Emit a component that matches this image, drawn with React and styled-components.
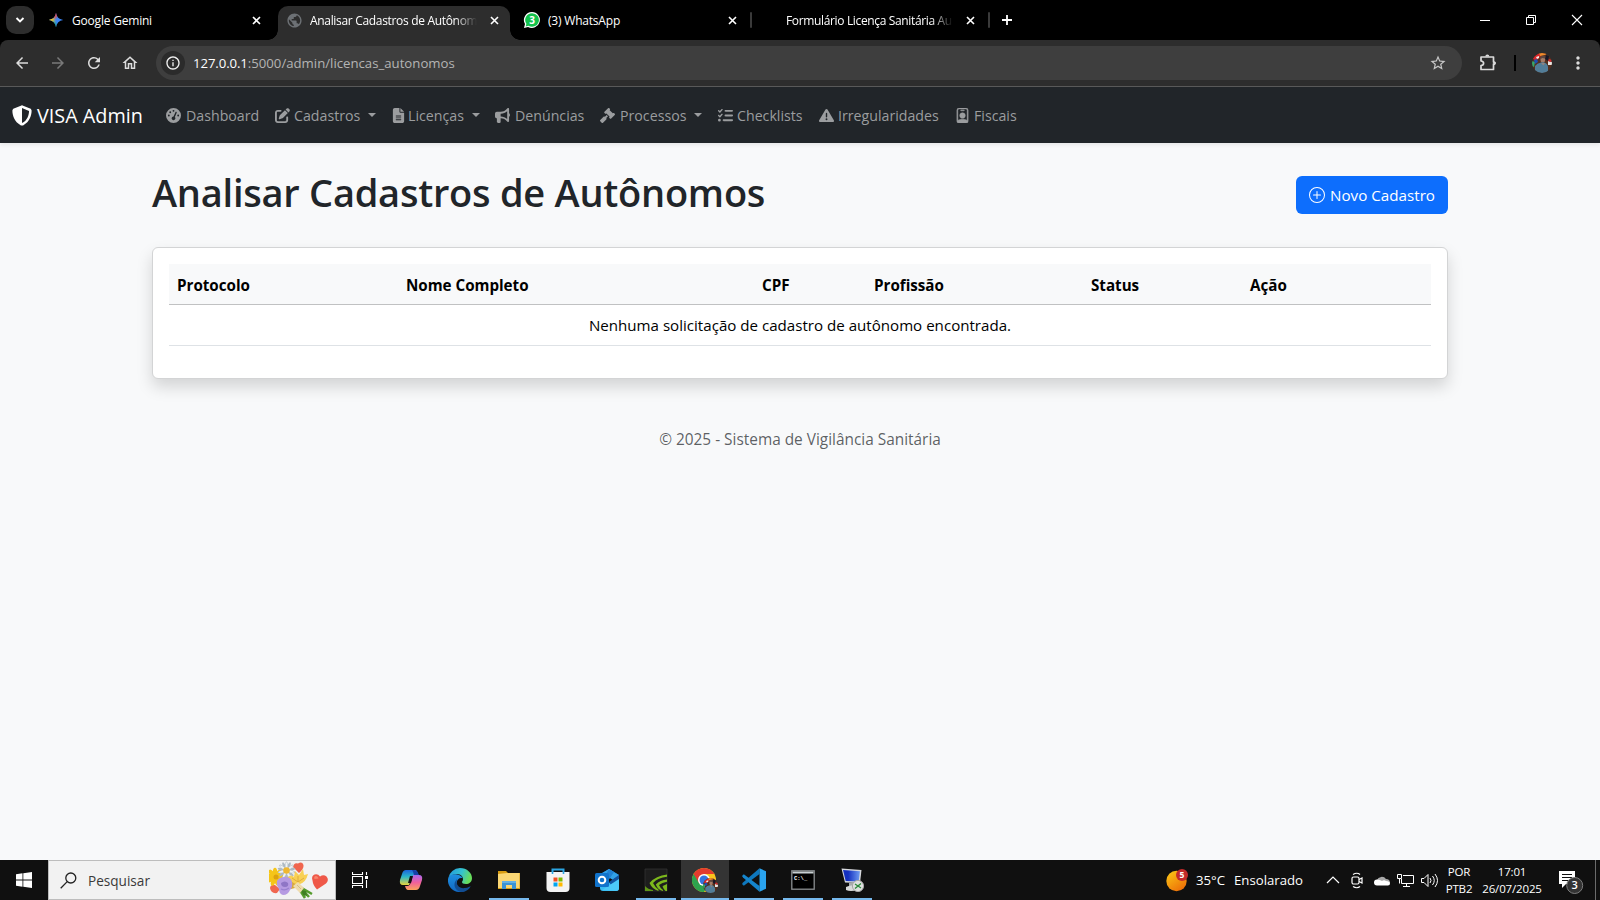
import React from 'react';
import styled, { createGlobalStyle } from 'styled-components';
import { FaGaugeHigh, FaPenToSquare, FaFileLines, FaBullhorn, FaGavel, FaListCheck, FaTriangleExclamation } from 'react-icons/fa6';
import { BsPersonBadge, BsPlusCircle } from 'react-icons/bs';
import { MdArrowBack, MdArrowForward, MdRefresh, MdOutlineHome, MdInfoOutline, MdStarBorder, MdMoreVert, MdPublic } from 'react-icons/md';

const Global = createGlobalStyle`
  * { box-sizing: border-box; }
  body { margin: 0; overflow: hidden; font-family: "Open Sans", "Noto Sans", sans-serif; }
  svg { display: block; flex: none; }
`;

const Screen = styled.div`
  width: 1600px;
  height: 900px;
  display: flex;
  flex-direction: column;
  background: #f8f9fa;
`;

/* ---------- browser chrome ---------- */
const TabStrip = styled.div`
  height: 40px;
  display: flex;
  align-items: center;
  background: #000;
  color: #fff;
  padding-left: 6px;
`;
const TabSearch = styled.div`
  width: 28px;
  height: 28px;
  border-radius: 10px;
  background: #2d2d2d;
  display: grid;
  place-items: center;
`;
const Tab = styled.div`
  position: relative;
  width: ${p => p.$width}px;
  height: 34px;
  align-self: flex-end;
  display: flex;
  align-items: center;
  padding: 0 ${p => p.$right || 10}px 6px ${p => p.$left}px;
  border-radius: 10px 10px 0 0;
  background: ${p => (p.$active ? '#2d2d2d' : 'transparent')};
  ${p => p.$active && `
    &::before, &::after {
      content: '';
      position: absolute;
      bottom: 0;
      width: 10px;
      height: 10px;
    }
    &::before { left: -10px; background: radial-gradient(circle at 0 0, transparent 9.5px, #2d2d2d 10px); }
    &::after { right: -10px; background: radial-gradient(circle at 100% 0, transparent 9.5px, #2d2d2d 10px); }
  `}
`;
const Favicon = styled.span`
  width: ${p => p.$width || 16}px;
  margin-right: ${p => p.$gap || 8}px;
  display: flex;
  justify-content: center;
`;
const TabTitle = styled.span`
  flex: 1;
  min-width: 0;
  padding-top: 2px;
  overflow: hidden;
  white-space: nowrap;
  font-size: 12px;
  line-height: 18px;
  letter-spacing: ${p => p.$track || -0.2}px;
  ${p => p.$fade && 'mask-image: linear-gradient(to right, #000 calc(100% - 22px), transparent);'}
`;
const TabClose = styled.span`
  width: 12px;
  margin-left: 11px;
  display: flex;
  justify-content: center;
`;
const TabDivider = styled.span`
  width: 2px;
  height: 16px;
  background: #3a3a3a;
  border-radius: 1px;
`;
const NewTab = styled.span`
  margin-left: 11px;
`;
const WindowButtons = styled.div`
  margin-left: auto;
  display: flex;
`;
const WindowButton = styled.span`
  width: 46px;
  height: 40px;
  display: grid;
  place-items: center;
`;
const ToolbarBack = styled.div`
  background: #000;
`;
const Toolbar = styled.div`
  height: 47px;
  display: flex;
  align-items: center;
  background: #2d2d2d;
  border-bottom: 1px solid #5a5a5a;
  border-radius: 8px 8px 0 0;
  padding-left: 4px;
  color: #dcdcdc;
`;
const ToolButton = styled.span`
  width: 36px;
  display: grid;
  place-items: center;
  color: ${p => (p.$dim ? '#797979' : '#dcdcdc')};
`;
const AddressBar = styled.div`
  width: 1306px;
  height: 34px;
  flex: none;
  margin-left: 8px;
  padding: 0 15px 0 5px;
  border-radius: 17px;
  background: #3e3e3e;
  display: flex;
  align-items: center;
`;
const SiteInfo = styled.span`
  width: 24px;
  height: 24px;
  border-radius: 50%;
  background: #2b2b2b;
  display: grid;
  place-items: center;
  color: #f1f1f1;
`;
const Url = styled.span`
  flex: 1;
  margin-left: 8px;
  font-size: 13.2px;
  color: #b4b4b4;
  b { font-weight: 400; color: #fff; letter-spacing: -0.1px; }
`;
const ToolDivider = styled.span`
  width: 2px;
  height: 16px;
  margin: 0 16px 0 8px;
  background: #000;
`;
const Tools = styled.div`
  display: flex;
  align-items: center;
  gap: 0;
  margin-left: 8px;
`;
const MenuButton = styled.span`
  margin-left: 16px;
`;

/* ---------- page ---------- */
const Navbar = styled.nav`
  height: 56px;
  display: flex;
  align-items: center;
  padding-left: 12px;
  background: #212529;
  box-shadow: 0 2px 4px rgba(0, 0, 0, 0.075);
`;
const Brand = styled.span`
  width: 146px;
  display: flex;
  align-items: center;
  gap: 5px;
  color: #fff;
  font-size: 19.8px;
  white-space: nowrap;
`;
const NavLink = styled.span`
  width: ${p => p.$width}px;
  padding-left: 8px;
  display: flex;
  align-items: center;
  color: #9b9d9f;
  font-size: 14.2px;
  white-space: nowrap;
`;
const NavIcon = styled.span`
  width: ${p => p.$width}px;
  margin-right: 4px;
  display: flex;
  justify-content: ${p => p.$align || 'flex-start'};
`;
const Caret = styled.span`
  margin-left: 8px;
  border-top: 4px solid currentColor;
  border-left: 4px solid transparent;
  border-right: 4px solid transparent;
`;
const Page = styled.main`
  flex: 1;
  width: 1296px;
  margin: 0 auto;
  padding-top: 24px;
`;
const Heading = styled.div`
  height: 56px;
  display: flex;
  justify-content: space-between;
  margin-bottom: 24px;
`;
const Title = styled.h1`
  margin: 0;
  font-size: 38px;
  line-height: 50px;
  font-weight: 600;
  letter-spacing: -0.25px;
  color: #212529;
  white-space: nowrap;
`;
const NewButton = styled.button`
  width: 152px;
  height: 38px;
  margin-top: 9px;
  padding: 0 0 0 13px;
  border: 0;
  border-radius: 6px;
  background: #0d6efd;
  color: #fff;
  font: 15.2px "Open Sans", sans-serif;
  display: flex;
  align-items: center;
  gap: 5px;
  white-space: nowrap;
`;
const Card = styled.section`
  height: 132px;
  padding: 16px;
  background: #fff;
  border: 1px solid #d3d4d5;
  border-radius: 6px;
  box-shadow: 0 8px 16px rgba(0, 0, 0, 0.15);
`;
const Table = styled.table`
  width: 1262px;
  table-layout: fixed;
  border-collapse: separate;
  border-spacing: 0;
  color: #000;
`;
const HeadCell = styled.th`
  width: ${p => p.$width}px;
  height: 41px;
  padding: 1px 8px 0;
  text-align: left;
  font-weight: 700;
  font-size: 15.2px;
  letter-spacing: -0.02px;
  background: #f8f9fa;
  border-bottom: 1px solid #c0c1c2;
`;
const EmptyCell = styled.td`
  height: 41px;
  padding: 0;
  text-align: center;
  font-size: 15.12px;
  border-bottom: 1px solid #dee2e6;
`;
const Footer = styled.footer`
  margin-top: 49px;
  line-height: 24px;
  text-align: center;
  font-size: 15.4px;
  color: rgba(33, 37, 41, 0.73);
`;

/* ---------- taskbar ---------- */
const Taskbar = styled.div`
  height: 40px;
  display: flex;
  background: #101010;
  color: #fff;
`;
const StartButton = styled.span`
  width: 48px;
  display: grid;
  place-items: center;
`;
const SearchBox = styled.div`
  width: 288px;
  height: 40px;
  padding-left: 11px;
  display: flex;
  align-items: center;
  background: #f2f2f2;
  border: 1px solid #bdbdbd;
  color: #3a3a3a;
  font-size: 13.6px;
`;
const SearchLabel = styled.span`
  width: 181px;
  margin-left: 11px;
`;
const TaskView = styled.span`
  width: 50px;
  display: grid;
  place-items: center;
  padding-right: 2px;
`;
const Apps = styled.div`
  display: flex;
  margin-left: 1px;
`;
const AppButton = styled.span`
  width: 49px;
  display: grid;
  place-items: center;
  background-color: ${p => (p.$active ? '#343434' : 'transparent')};
  background-clip: padding-box;
  border-right: 1px solid transparent;
`;
const RunningApp = styled(AppButton)`
  background-image: linear-gradient(#76b9ed, #76b9ed);
  background-size: ${p => (p.$active ? 48 : 40)}px 2px;
  background-position: 50% 100%;
  background-repeat: no-repeat;
`;
const Tray = styled.div`
  margin-left: auto;
  display: flex;
  align-items: center;
`;
const Weather = styled.span`
  width: 155px;
  display: flex;
  align-items: center;
  font-size: 13.2px;
  white-space: nowrap;
`;
const Degrees = styled.span`
  width: 38px;
  margin-left: 7px;
`;
const TrayIcon = styled.span`
  width: 24px;
  display: grid;
  place-items: center;
`;
const Stacked = styled.span`
  width: ${p => p.$width}px;
  text-align: center;
  font-size: 11.5px;
  line-height: 17.5px;
  letter-spacing: -0.15px;
  white-space: nowrap;
`;
const Notifications = styled.span`
  width: 48px;
  display: flex;
  justify-content: center;
`;
const ShowDesktop = styled.span`
  width: 5px;
  height: 40px;
  border-left: 1px solid #6b6b6b;
`;

const Cross = () => (
  <svg width="9" height="9" viewBox="0 0 9 9" stroke="#fff" strokeWidth="1.600"><path d="M1 1l7 7M8 1l-7 7" /></svg>
);

const ShieldIcon = () => (
  <svg width="20" height="21" viewBox="6 0 500 512" fill="#fff">
    <path fillRule="evenodd" d="M256 0c5 0 9 1 13 3l189 80c22 9 38 31 38 57-.5 99-41 281-213 363-17 8-37 8-53 0C57 421 16.500 239 16 140c0-26 16-48 38-57L243 3c4-2 8-3 13-3zM256 67v378c138-67 175-215 176-304z" />
  </svg>
);

const PuzzleIcon = () => (
  <svg width="18" height="18" viewBox="0 0 18 18">
    <path d="M2 3h12.500v5l1.500 1-1.500 1v5.500H2v-4q2.600-.3 2.600-2.300T2 7z" fill="none" stroke="#dcdcdc" strokeWidth="1.700" strokeLinejoin="round" />
    <path d="M6.300 2.600a2 2 0 0 1 4 0zM14.800 7.200a2 2 0 0 1 0 4z" fill="#dcdcdc" />
  </svg>
);

const GeminiIcon = () => (
  <svg width="16" height="16" viewBox="0 0 16 16">
    <defs>
      <clipPath id="spark"><path d="M8 .8C8.700 5 11 7.300 15.200 8 11 8.700 8.700 11 8 15.200 7.300 11 5 8.700.8 8 5 7.300 7.300 5 8 .8z" /></clipPath>
      <filter id="soft"><feGaussianBlur stdDeviation="1" /></filter>
    </defs>
    <g clipPath="url(#spark)">
      <rect width="16" height="16" fill="#3b86f7" />
      <g filter="url(#soft)">
        <path d="M4-1h8L8 6 6 7z" fill="#f0453a" />
        <path d="M-1 4l7 2v4l-7 2z" fill="#f9c613" />
        <path d="M3 9l4 1 2 7H4z" fill="#19ac58" />
      </g>
    </g>
  </svg>
);

const WhatsAppIcon = () => (
  <svg width="18" height="18" viewBox="0 0 18 18">
    <path d="M9 1a8 8 0 1 1-4 15L1 17l1-4A8 8 0 0 1 9 1z" fill="#fff" />
    <path d="M9 2.200a6.800 6.800 0 1 1-3.600 12.500l-2.700.7.700-2.600A6.800 6.800 0 0 1 9 2.200z" fill="#12c14c" />
    <text x="9.100" y="12.700" textAnchor="middle" fontSize="10" fontWeight="700" fontFamily="Open Sans" fill="#fff">3</text>
  </svg>
);

const Avatar = ({ size = 20, ...rest }) => (
  <svg width={size} height={size} viewBox="0 0 20 20" {...rest}>
    <clipPath id="face"><circle cx="10" cy="10" r="10" /></clipPath>
    <g clipPath="url(#face)">
      <rect width="20" height="20" fill="#54301f" />
      <path d="M0 5l7-5 2 3-5 5z" fill="#d8262b" />
      <path d="M7 0h9l-3 2-5 1z" fill="#ef8a2c" />
      <path d="M0 8l3 1-1 5-2-1z" fill="#36a86a" />
      <path d="M2 7l3-1 1 3-3 2z" fill="#1f4fb4" />
      <path d="M4 4l3-1v2l-2 1z" fill="#f1ece8" />
      <path d="M14 2l3 1-1 5-3-2z" fill="#16182b" />
      <path d="M16 8l4 1v3l-4 0z" fill="#e9e4e0" />
      <path d="M17 6l3 1-1 2-3-1z" fill="#d2292f" />
      <ellipse cx="10.800" cy="6.500" rx="2.300" ry="3.200" fill="#a57d69" />
      <path d="M8 5q2-3.500 5.500-1.500l-.5 2-3-.5-1 1z" fill="#5e4740" />
      <path d="M3 20V13q2-3 6-3.500 5-1 7 4V20z" fill="#527d98" />
      <path d="M9 10l2.300 2.500L13 10z" fill="#8f8580" />
    </g>
  </svg>
);

const petals = (cx, cy, count, rx, ry, fill) => Array.from({ length: count }, (_, i) => (
  <ellipse key={`${cx}-${i}`} cx={cx} cy={cy - ry} rx={rx} ry={ry} fill={fill} transform={`rotate(${(360 / count) * i} ${cx} ${cy})`} />
));

const Flowers = () => (
  <svg width="62" height="38" viewBox="0 0 62 38">
    <path d="M29 26l7 11M31 26l12 7M30 25l10 11" stroke="#559c2d" strokeWidth="2.600" />
    <path d="M32 29l5 1 1 5-4-1z" fill="#3f7f22" />
    <path d="M24 6q1-5 5-3.500Q33 0 34.500 4q.5 4-4.500 8z" fill="#f0664f" />
    <path d="M1 27q1-4 5-3l5 4-3 4q-6 1-7-5z" fill="#f0664f" />
    {petals(6, 16, 9, 2.2, 4.6, '#f5c518')}
    <circle cx="7" cy="16" r="2.500" fill="#dca20f" />
    <path d="M15 15l12 2 3 9-8 2-9-9z" fill="#d9a93c" />
    {petals(17.500, 9.500, 14, 1.300, 4.500, '#aebac2')}
    {petals(17.500, 9.500, 7, 1, 4.100, '#eef2f4')}
    <circle cx="17.500" cy="9.500" r="3.300" fill="#efb72f" />
    <path d="M19 16q3-3 6 0l1-6 4 4 4-6 1 6 4-1q-2 8-8 10-8 1-12-7z" fill="#f8d055" />
    <path d="M23 17l6 4 6-4M29 15v6" stroke="#dda83a" strokeWidth=".9" fill="none" />
    <path d="M24 25l5-4 6 6-4 5z" fill="#efdcae" />
    <path d="M28 24l4 4" stroke="#cdb57b" strokeWidth=".8" />
    <path d="M8 20q2-4 8-4 6 0 7 5 1 5-2 8-2 5-7 5-4-1-4-6-3-4-2-8z" fill="#b69be2" />
    <path d="M12 22q4-3 7 0 1 4-3 4t-4-4z" fill="#8f76c6" />
    <path d="M12 28q4 2 8-1" stroke="#9a81d0" strokeWidth="1.200" fill="none" />
    <path d="M43.500 19.500q-1.500-4.500 2-6 3.500-1 5.500 2 3.500-2.500 6.500 0 3 3.500-.5 7l-9 6q-4-4-4.500-9z" fill="#ef5848" />
    <path d="M45.500 18q-1-3 1.500-3 2 0 2.500 2.500z" fill="#f8856d" />
  </svg>
);

const CopilotIcon = () => (
  <svg width="24" height="24" viewBox="0 0 24 24">
    <defs>
      <linearGradient id="cpA" x1="0" y1="0" x2="0" y2="1"><stop offset="0" stopColor="#1b63dc" /><stop offset=".45" stopColor="#2bb5c9" /><stop offset="1" stopColor="#e8d43c" /></linearGradient>
      <linearGradient id="cpB" x1="0" y1="0" x2="0" y2="1"><stop offset="0" stopColor="#a968ee" /><stop offset=".5" stopColor="#f0609c" /><stop offset="1" stopColor="#fba35b" /></linearGradient>
    </defs>
    <path d="M7 2h9q2 0 3 4l1 2h-4q-3 0-4 4l-2 5H4q-4 0-3-5l2-6q1-4 4-4z" fill="url(#cpA)" />
    <path d="M17 22H9q-2 0-3-4h2q3 0 4-4l2-7h6q4 0 3 5l-2 6q-1 4-4 4z" fill="url(#cpB)" />
    <path d="M13 2h2q3 0 4 3l1 2h-5q-1-4-2-5z" fill="#1641a8" />
    <path d="M11 8h3l-2 7H9z" fill="#101010" />
  </svg>
);

const EdgeIcon = () => (
  <svg width="24" height="24" viewBox="0 0 24 24">
    <defs>
      <linearGradient id="edA" x1="0" y1="0" x2="1" y2=".3"><stop offset="0" stopColor="#2195dd" /><stop offset=".6" stopColor="#35c3cf" /><stop offset="1" stopColor="#67dd5c" /></linearGradient>
      <linearGradient id="edB" x1="0" y1="0" x2="0" y2="1"><stop offset="0" stopColor="#1f8fdf" /><stop offset="1" stopColor="#1168c3" /></linearGradient>
    </defs>
    <path d="M.3 10A12 12 0 0 1 12 0c7 0 12 5 12 10 0 4-3 6-6 6-3 0-4-1-4-2 0-.8 1-1 1-3 0-2-2-5-6-5-5 0-8 3-8.700 4z" fill="url(#edA)" />
    <path d="M0 11C1 7 5 6 8 6.300c3 .2 6 2 6.700 4-3-1-6 1-6 5 0 5 5 7.500 9 7.500C8 27-1 20 0 11z" fill="url(#edB)" />
    <path d="M9 11c-2 6 3 10 8 9 3-.4 5-1.600 5.700-1.800C21 22 17 24 13 24c-6-1-9-8-4-13z" fill="#124d92" />
  </svg>
);

const ExplorerIcon = () => (
  <svg width="24" height="24" viewBox="0 0 24 24">
    <path d="M1 3h8l2 2h12v16H1z" fill="#d99d12" /><path d="M1 6l9-1h12.500v15H1z" fill="#fbd774" />
    <path d="M5 21v-8h14v8h-4v-4H9v4z" fill="#3b93d6" /><path d="M5 13h14v2H5z" fill="#62b0e6" />
  </svg>
);

const StoreIcon = () => (
  <svg width="24" height="24" viewBox="0 0 24 24">
    <path d="M6.500 5V1.500h11V5" fill="none" stroke="#2ba5e2" strokeWidth="2" />
    <path d="M.5 4h23v16q0 4-4 4h-15q-4 0-4-4z" fill="#f3f3f3" />
    <path d="M6.500 4v2M17.500 4v2" stroke="#2ba5e2" strokeWidth="1.600" />
    <path d="M7.500 9.500h4v4h-4z" fill="#f25022" /><path d="M12.500 9.500h4v4h-4z" fill="#7fba00" />
    <path d="M7.500 14.500h4v4h-4z" fill="#00a4ef" /><path d="M12.500 14.500h4v4h-4z" fill="#ffb900" />
  </svg>
);

const OutlookIcon = () => (
  <svg width="26" height="24" viewBox="0 0 26 24">
    <path d="M5 7l10-6 10 6v3H5z" fill="#1561b4" /><path d="M8 5l7-4 10 6-6 5z" fill="#31a1e8" />
    <path d="M15 1l5 3-6 9-4-3z" fill="#2181d4" /><path d="M6 9l9 6 10-7v12q0 3-3 3H9q-3 0-3-3z" fill="#36bdf2" />
    <path d="M15 14l10-7v5l-8 5z" fill="#1253a0" /><path d="M8 22l17-11v9q0 3-3 3z" fill="#4cc9f8" />
    <rect x="1" y="5" width="14" height="14" rx="1.500" fill="#1173cb" />
    <circle cx="8" cy="12" r="3.300" fill="none" stroke="#fff" strokeWidth="2" />
  </svg>
);

const NvidiaIcon = () => (
  <svg width="24" height="24" viewBox="0 0 24 24">
    <path d="M1 1h22v22H1z" fill="#1d1d1d" stroke="#333" strokeWidth=".8" />
    <path d="M23 6.500v2.300Q14 9.500 9 15q2 4 5.500 6.500V23Q8 21 5.500 15 12 7.500 23 6.500z" fill="#7cb81c" />
    <path d="M23 11.500v2.300q-5 .7-8 3.200 1.500 3.500 4 5v1q-5-1-7.200-6.500Q16 12 23 11.500z" fill="#7cb81c" />
    <path d="M23 16v7h-1.500q-2-2-3-4.500Q20 17 23 16z" fill="#7cb81c" />
    <path d="M1 18q3 3.500 8 4v1H1z" fill="#5f9617" />
  </svg>
);

const ChromeIcon = () => (
  <svg width="26" height="26" viewBox="0 0 26 26">
    <circle cx="12" cy="13" r="12" fill="#fbc31c" />
    <path d="M12 13L1.600 7A12 12 0 0 0 12 25l5-9z" fill="#2da44e" />
    <path d="M12 7h10.400A12 12 0 0 0 1.600 7L7 16z" fill="#e33b2e" />
    <circle cx="12" cy="13" r="6" fill="#fff" /><circle cx="12" cy="13" r="4.500" fill="#3474e0" />
    <Avatar size={15} x="11" y="11" />
  </svg>
);

const CodeIcon = () => (
  <svg width="24" height="24" viewBox="0 0 24 24">
    <path d="M0 16l1.800 1.700L17.500 6V.3L1 14.500z" fill="#0e77bd" />
    <path d="M0 8l1.800-1.700L17.500 18v5.700L1 9.500z" fill="#1585cc" />
    <path d="M17.500.3L24 3.200v17.600l-6.500 2.900z" fill="#2aa3ee" />
  </svg>
);

const TerminalIcon = () => (
  <svg width="24" height="20" viewBox="0 0 24 20">
    <rect x=".8" y=".8" width="22.400" height="18.400" fill="#000" stroke="#8b8f91" strokeWidth="1.300" />
    <path d="M1.500 1.500h21v2h-21z" fill="#c9d0d3" />
    <text x="3" y="9.500" fontSize="5.500" fontFamily="Liberation Mono" fontWeight="700" fill="#fff">C:\_</text>
  </svg>
);

const RemoteIcon = () => (
  <svg width="24" height="26" viewBox="0 0 24 26">
    <defs><linearGradient id="scr" x1="0" y1="0" x2="1" y2="0"><stop offset=".3" stopColor="#1531c0" /><stop offset="1" stopColor="#6f9df2" /></linearGradient></defs>
    <path d="M9 16h7l1 5H9z" fill="#a6abad" /><path d="M6 20q6-3 11-1l1 4q-8 2-12 0z" fill="#d9dada" />
    <path d="M1.500 1.500l20 1.500-1.500 13-15-.5z" fill="#d6d8dd" /><path d="M3 3l17 1.200-1.300 10.300-13-.5z" fill="url(#scr)" />
    <circle cx="18" cy="19" r="5.600" fill="#dfe0df" stroke="#a6a6a6" /><path d="M15 17l3 2-3 2.500M21 16.500l-3 2.500 3 2" stroke="#2c8a3b" strokeWidth="1.300" fill="none" />
  </svg>
);

const WeatherIcon = () => (
  <svg width="23" height="24" viewBox="0 0 23 24">
    <defs><linearGradient id="sun" x1="0" y1="0" x2=".7" y2="1"><stop offset="0" stopColor="#fccb16" /><stop offset="1" stopColor="#ec6f08" /></linearGradient></defs>
    <circle cx="10.500" cy="13" r="10.200" fill="url(#sun)" /><circle cx="16" cy="7" r="6" fill="#c42b2b" />
    <text x="16" y="10" fontSize="8.500" fontWeight="700" fontFamily="Open Sans" textAnchor="middle" fill="#fff">5</text>
  </svg>
);

const NotificationIcon = () => (
  <svg width="26" height="28" viewBox="0 0 26 28">
    <path d="M1 5h16v13H8l-4 4v-4H1z" fill="#fff" />
    <path d="M4 8.500h10M4 11.500h10M4 14.500h7" stroke="#101010" strokeWidth="1.200" />
    <circle cx="16.700" cy="19.500" r="8" fill="#333" stroke="#7d7d7d" />
    <text x="16.700" y="23.300" fontSize="11" fontWeight="600" fontFamily="Open Sans" textAnchor="middle" fill="#fff">3</text>
  </svg>
);

const navItems = [
  { label: 'Dashboard', icon: FaGaugeHigh, slot: 16, width: 108 },
  { label: 'Cadastros', icon: FaPenToSquare, slot: 16, width: 118, menu: true, align: 'flex-end' },
  { label: 'Licenças', icon: FaFileLines, slot: 12, width: 103, menu: true, align: 'center' },
  { label: 'Denúncias', icon: FaBullhorn, slot: 16, width: 105 },
  { label: 'Processos', icon: FaGavel, slot: 16, width: 117, menu: true },
  { label: 'Checklists', icon: FaListCheck, slot: 16, width: 102, align: 'flex-end' },
  { label: 'Irregularidades', icon: FaTriangleExclamation, slot: 15, width: 135 },
  { label: 'Fiscais', icon: BsPersonBadge, slot: 16, width: 80, align: 'flex-end', bold: true },
];

const columns = [
  ['Protocolo', 229], ['Nome Completo', 356], ['CPF', 112], ['Profissão', 217], ['Status', 159], ['Ação', 189],
];

const apps = [
  { icon: CopilotIcon }, { icon: EdgeIcon }, { icon: ExplorerIcon, running: true }, { icon: StoreIcon },
  { icon: OutlookIcon }, { icon: NvidiaIcon, running: true }, { icon: ChromeIcon, running: true, active: true },
  { icon: CodeIcon, running: true }, { icon: TerminalIcon, running: true }, { icon: RemoteIcon, running: true },
];

function Browser() {
  return (
    <>
      <TabStrip>
        <TabSearch><svg width="10" height="8" viewBox="0 0 10 8"><path d="M1.500 2L5 5.500 8.500 2" fill="none" stroke="#fff" strokeWidth="1.900" /></svg></TabSearch>
        <Tab $width={244} $left={14} $right={16}>
          <Favicon><GeminiIcon /></Favicon><TabTitle>Google Gemini</TabTitle><TabClose><Cross /></TabClose>
        </Tab>
        <Tab $width={232} $left={8} $active>
          <Favicon><MdPublic size={17} color="#6d7175" /></Favicon><TabTitle $fade $track={-0.32}>Analisar Cadastros de Autônom</TabTitle><TabClose><Cross /></TabClose>
        </Tab>
        <Tab $width={240} $left={13} $right={12}>
          <Favicon $width={18} $gap={7}><WhatsAppIcon /></Favicon><TabTitle>(3) WhatsApp</TabTitle><TabClose><Cross /></TabClose>
        </Tab>
        <TabDivider />
        <Tab $width={236} $left={34} $right={12}>
          <TabTitle $fade $track={-0.35}>Formulário Licença Sanitária Au</TabTitle><TabClose><Cross /></TabClose>
        </Tab>
        <TabDivider />
        <NewTab><svg width="12" height="12" viewBox="0 0 12 12" stroke="#fff" strokeWidth="1.800"><path d="M6 1v10M1 6h10" /></svg></NewTab>
        <WindowButtons>
          <WindowButton><svg width="10" height="10" stroke="#fff"><path d="M0 5.500h10" /></svg></WindowButton>
          <WindowButton><svg width="11" height="11" fill="none" stroke="#fff"><path d="M.5 2.500h7v7h-7zM2.500 2.500v-2h7v7h-2" /></svg></WindowButton>
          <WindowButton><svg width="12" height="12" stroke="#fff" strokeWidth="1.100"><path d="M1 1l10 10M11 1L1 11" /></svg></WindowButton>
        </WindowButtons>
      </TabStrip>
      <ToolbarBack>
        <Toolbar>
          <ToolButton><MdArrowBack size={18} /></ToolButton>
          <ToolButton $dim><MdArrowForward size={18} /></ToolButton>
          <ToolButton><MdRefresh size={18} /></ToolButton>
          <ToolButton><MdOutlineHome size={18} /></ToolButton>
          <AddressBar>
            <SiteInfo><MdInfoOutline size={16} /></SiteInfo>
            <Url><b>127.0.0.1</b>:5000/admin/licencas_autonomos</Url>
            <MdStarBorder size={18} color="#c7c7c7" />
          </AddressBar>
          <Tools>
            <ToolButton><PuzzleIcon /></ToolButton>
            <ToolDivider />
            <Avatar />
            <MenuButton><MdMoreVert size={20} /></MenuButton>
          </Tools>
        </Toolbar>
      </ToolbarBack>
    </>
  );
}

function SystemBar() {
  return (
    <Taskbar>
      <StartButton><svg width="16" height="16" viewBox="0 0 16 16" fill="#fff"><path d="M0 2.200L6.500 1.300v6.200H0zM7.300 1.200L16 0v7.500H7.300zM0 8.500h6.500v6.200L0 13.800zM7.300 8.500H16V16l-8.700-1.200z" /></svg></StartButton>
      <SearchBox>
        <svg width="17" height="17" viewBox="0 0 17 17" fill="none" stroke="#222" strokeWidth="1.300"><circle cx="10.800" cy="6" r="5" /><path d="M7.200 9.600L.7 16.200" /></svg>
        <SearchLabel>Pesquisar</SearchLabel>
        <Flowers />
      </SearchBox>
      <TaskView><svg width="17" height="16" viewBox="0 0 17 16" fill="none" stroke="#fff" strokeWidth="1.100"><path d="M.5 4.500h10v7H.5zM.5 0v2.500h10V0M.5 16v-2.500h10V16M14.500 0v3M14.500 8v8" /><path d="M13 4h3v3h-3z" fill="#fff" stroke="none" /></svg></TaskView>
      <Apps>
        {apps.map(({ icon: Icon, running, active }, i) => {
          const Button = running ? RunningApp : AppButton;
          return <Button key={i} $active={active}><Icon /></Button>;
        })}
      </Apps>
      <Tray>
        <Weather><WeatherIcon /><Degrees>35°C</Degrees>Ensolarado</Weather>
        <TrayIcon><svg width="14" height="8" fill="none" stroke="#fff" strokeWidth="1.200"><path d="M1 7l6-6 6 6" /></svg></TrayIcon>
        <TrayIcon><svg width="14" height="17" viewBox="0 0 14 17" fill="none" stroke="#fff" strokeWidth="1.200"><rect x="2" y="5" width="7" height="7" rx="1.500" /><path d="M9 7.500l3-1.500v5L9 9.500M3 2.500q4-2.500 7 0M3 14.500q4 2.500 7 0" /></svg></TrayIcon>
        <TrayIcon><svg width="17" height="12" viewBox="0 0 17 12"><path d="M4 6a5 4.500 0 0 1 9-1q4 0 4 4H2z" fill="#a9a9a9" /><path d="M4 11.500a3 3 0 0 1 0-6q3 0 5 1.500 2-1.500 4 0 4 0 4 2.500 0 2-2 2z" fill="#fff" /></svg></TrayIcon>
        <TrayIcon><svg width="17" height="15" viewBox="0 0 17 15" fill="none" stroke="#fff"><path d="M6 2.500h10.500v8H4.500V6M9.500 10.500v3M6 13.500h7M.5 1.500h4v4h-4zM2.500 5.500v5" /></svg></TrayIcon>
        <TrayIcon><svg width="17" height="15" viewBox="0 0 17 15" fill="none" stroke="#fff"><path d="M.5 5.500H3l4-4v12l-4-4H.5zM9 5q2 2.500 0 5M11.500 3q3.500 4.500 0 9M14 1q5 6.500 0 13" /></svg></TrayIcon>
        <Stacked $width={36}>POR<br />PTB2</Stacked>
        <Stacked $width={70}>17:01<br />26/07/2025</Stacked>
        <Notifications><NotificationIcon /></Notifications>
        <ShowDesktop />
      </Tray>
    </Taskbar>
  );
}

export default function App() {
  return (
    <Screen>
      <Global />
      <Browser />
      <Navbar>
        <Brand><ShieldIcon />VISA Admin</Brand>
        {navItems.map(({ label, icon: Icon, slot, width, menu, align, bold }) => (
          <NavLink key={label} $width={width}>
            <NavIcon $width={slot} $align={align}><Icon size={15} strokeWidth={bold ? 0.5 : 0} /></NavIcon>{label}{menu && <Caret />}
          </NavLink>
        ))}
      </Navbar>
      <Page>
        <Heading>
          <Title>Analisar Cadastros de Autônomos</Title>
          <NewButton><BsPlusCircle size={16} />Novo Cadastro</NewButton>
        </Heading>
        <Card>
          <Table>
            <thead><tr>{columns.map(([name, width]) => <HeadCell key={name} $width={width}>{name}</HeadCell>)}</tr></thead>
            <tbody><tr><EmptyCell colSpan={6}>Nenhuma solicitação de cadastro de autônomo encontrada.</EmptyCell></tr></tbody>
          </Table>
        </Card>
        <Footer>© 2025 - Sistema de Vigilância Sanitária</Footer>
      </Page>
      <SystemBar />
    </Screen>
  );
}
